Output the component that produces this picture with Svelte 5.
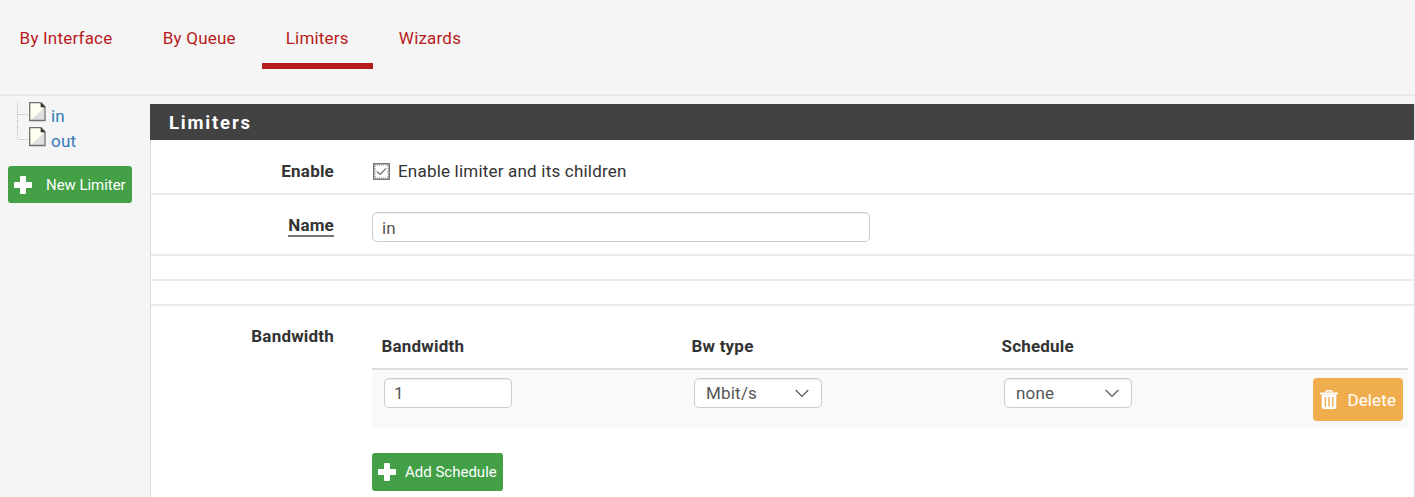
<script>
  const tabs = [
    { label: 'By Interface', width: 137 },
    { label: 'By Queue', width: 124.5 },
    { label: 'Limiters', width: 111.5 },
    { label: 'Wizards', width: 114 }
  ];
  const limiters = ['in', 'out'];
  let enabled = $state(true);
  let name = $state('in');
  let bandwidth = $state('1');
</script>

{#snippet plus()}
  <svg class="plus" viewBox="0 0 18 18"><path d="M6 1q0-1 1-1h4q1 0 1 1v5h5q1 0 1 1v4q0 1-1 1h-5v5q0 1-1 1H7q-1 0-1-1v-5H1q-1 0-1-1V7q0-1 1-1h5z" fill="#fff" /></svg>
{/snippet}

{#snippet select(value)}
  <button class="select">
    <span>{value}</span>
    <svg width="14" height="9" viewBox="0 0 14 9"><path d="M.7 1 7 7.3 13.3 1" fill="none" stroke="#555" stroke-width="1.2" /></svg>
  </button>
{/snippet}

<div class="page">
  <nav>
    {#each tabs as tab}
      <a href="#top" class:active={tab.label === 'Limiters'} style:width="{tab.width}px"><span>{tab.label}</span></a>
    {/each}
  </nav>
  <div class="content">
    <aside>
      <ul>
        {#each limiters as item, i}
          <li>
            <svg class="branch" width="12" height="25" viewBox="0 0 12 25">
              <path d={i === 0 ? 'M.5 0V25M.5 12.5H11' : 'M.5 0V12.5H11'} fill="none" stroke="#bbb" stroke-dasharray="1 1" />
            </svg>
            <svg class="doc" width="17" height="20" viewBox="0 0 17 20">
              <path d="M.7.7H12L16 4.7V18.5H.7z" fill="#fffff0" />
              <path d="M15.5 5V18H2z" fill="#e0e0e0" />
              <path d="M.7.7H12L16 4.7V18.5H.7z" fill="none" stroke="#707070" stroke-width="1.3" />
              <path d="M12 1V5H16z" fill="#333" stroke="#444" stroke-width=".8" />
            </svg>
            <a href="#top">{item}</a>
          </li>
        {/each}
      </ul>
      <button class="green new">{@render plus()}<span>New Limiter</span></button>
    </aside>
    <main>
      <h2>Limiters</h2>
      <div class="row enable">
        <div class="label">Enable</div>
        <button class="check" onclick={() => (enabled = !enabled)} aria-label="Enable">
          <svg width="17" height="17" viewBox="0 0 17 17">
            <rect x=".75" y=".75" width="15.5" height="15.5" fill="#fff" stroke="#777" stroke-width="1.5" />
            <rect x="2" y="2" width="13" height="13" fill="none" stroke="#888" stroke-width="1" stroke-dasharray="1 1" />
            {#if enabled}<path d="m3.8 8.3 3.2 3.2 6-6.2" fill="none" stroke="#666" stroke-width="1.1" />{/if}
          </svg>
        </button>
        <span>Enable limiter and its children</span>
      </div>
      <div class="row name">
        <div class="label"><u>Name</u></div>
        <input bind:value={name} />
      </div>
      <div class="row blank"></div>
      <div class="row blank"></div>
      <div class="row band">
        <div class="label">Bandwidth</div>
        <div class="schedules">
          <div class="grid head">
            <div>Bandwidth</div>
            <div>Bw type</div>
            <div>Schedule</div>
          </div>
          <div class="grid body">
            <input bind:value={bandwidth} />
            {@render select('Mbit/s')}
            {@render select('none')}
            <button class="delete">
              <svg width="18" height="19" viewBox="0 0 18 19">
                <path d="M6 2.8V1.6Q6 .8 7 .8h4q1 0 1 .8v1.2" fill="none" stroke="#fff" stroke-width="1.5" />
                <rect y="2.6" width="18" height="2" rx=".7" fill="#fff" />
                <path d="M1.7 4.5h14.6V17q0 2-2 2H3.7q-2 0-2-2z" fill="#fff" />
                <path d="M5.3 7v9.5M9 7v9.5M12.7 7v9.5" stroke="#f0ad4e" stroke-width="1.4" />
              </svg>
              <span>Delete</span>
            </button>
          </div>
          <button class="green add">{@render plus()}<span>Add Schedule</span></button>
        </div>
      </div>
    </main>
  </div>
</div>

<style>
  :global(body) { margin: 0; overflow: hidden; }
  .page, .page * { box-sizing: border-box; }
  .page { width: 1415px; height: 497px; overflow: hidden; background: #f5f5f5; color: #333; font: 17px/24px Roboto, sans-serif; letter-spacing: .2px; display: flex; flex-direction: column; }
  button, input { font: inherit; letter-spacing: inherit; border: 0; margin: 0; padding: 0; }
  a { text-decoration: none; }
  nav { height: 96px; flex: none; display: flex; border-bottom: 2px solid #e8e8e8; }
  nav a { height: 69px; color: #b71c1c; text-align: center; padding-top: 26px; white-space: nowrap; }
  nav a:first-child { padding-right: 5px; }
  nav a.active { border-bottom: 6px solid #b71c1c; }
  .content { flex: 1; display: flex; min-height: 0; }
  aside { width: 150px; padding: 6px 0 0 8px; }
  ul { list-style: none; margin: 0; padding: 0 0 0 9px; }
  li { display: flex; height: 25px; }
  .branch, .doc { flex: none; }
  li a { color: #337ab7; padding: 2px 0 0 5px; }
  .green { background: #43a047; color: #fff; border-radius: 3px; height: 38px; font-size: 15px; letter-spacing: 0; display: flex; align-items: center; padding-left: 6px; white-space: nowrap; }
  .plus { width: 18px; height: 18px; flex: none; }
  .new { width: 124px; height: 37px; margin-top: 14px; }
  .new span { margin-left: 14px; letter-spacing: -.05px; padding-top: 1px; }
  main { flex: 1; margin-top: 8px; background: #fff; border-left: 1px solid #ddd; border-right: 1px solid #ddd; }
  h2 { margin: 0 0 0 -1px; height: 36px; background: #424242; color: #fff; font-size: 18.5px; font-weight: 700; line-height: 38px; letter-spacing: 1.8px; padding-left: 19px; }
  .row { display: flex; border-bottom: 2px solid #ebebeb; }
  .label { width: 183px; margin-right: 38px; flex: none; text-align: right; font-weight: 700; }
  .enable { height: 55px; padding-top: 19px; }
  .check { width: 17px; height: 17px; background: none; margin: 4px 8px 0 1px; }
  .check svg { display: block; }
  .name { height: 61px; padding-top: 17px; }
  u { text-decoration: none; display: inline-block; line-height: 20px; border-bottom: 2px solid #777; margin-top: 3px; }
  input, .select { border: 1px solid #ccc; border-radius: 5px; height: 30px; color: #555; background: #fff; box-shadow: inset 0 1px 1px rgba(0,0,0,.075); padding: 1px 9px 0; outline: 0; }
  .name input { width: 498px; }
  .blank { height: 25px; }
  .band { border: 0; padding-top: 18px; }
  .schedules { width: 1036px; flex: none; }
  .grid { display: grid; grid-template-columns: 310px 310px 309px 107px; }
  .head { height: 46px; border-bottom: 2px solid #ddd; font-weight: 700; padding: 10px 0 0 9.5px; }
  .body { height: 58px; background: #f9f9f9; padding: 8px 0 0 12px; }
  .body input, .select { width: 128px; }
  .body input { padding-top: 0; }
  .select { display: flex; justify-content: space-between; align-items: center; padding: 0 12px 0 11px; }
  .delete { width: 90px; height: 43px; background: #f0ad4e; color: #fff; border-radius: 4px; display: flex; align-items: center; padding-left: 7px; letter-spacing: .1px; }
  .delete span { margin-left: 9.5px; }
  .add { width: 131px; margin-top: 25px; }
  .add span { margin-left: 9px; }
</style>
